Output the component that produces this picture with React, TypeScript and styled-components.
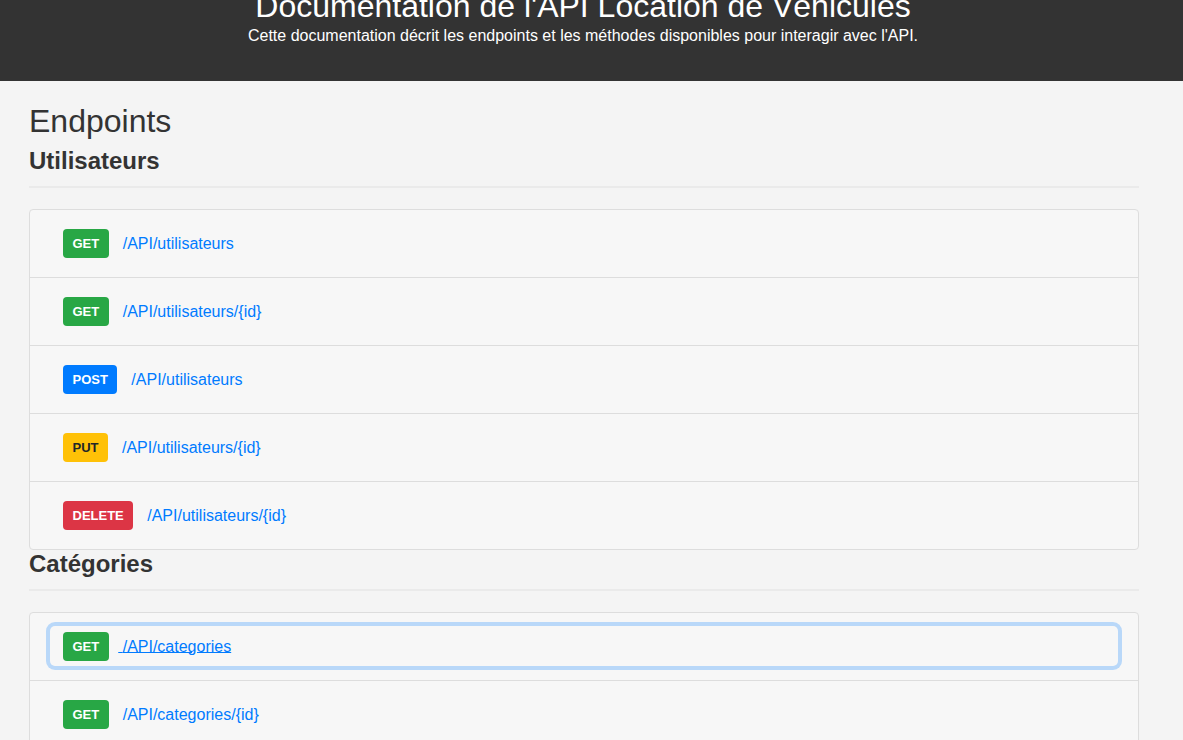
import React from "react";
import styled, { createGlobalStyle } from "styled-components";

type Method = "GET" | "POST" | "PUT" | "DELETE";

interface Endpoint {
    method: Method;
    path: string;
    focused?: boolean;
}

interface Section {
    title: string;
    endpoints: Endpoint[];
}

const sections: Section[] = [
    {
        title: "Utilisateurs",
        endpoints: [
            { method: "GET", path: "/API/utilisateurs" },
            { method: "GET", path: "/API/utilisateurs/{id}" },
            { method: "POST", path: "/API/utilisateurs" },
            { method: "PUT", path: "/API/utilisateurs/{id}" },
            { method: "DELETE", path: "/API/utilisateurs/{id}" },
        ],
    },
    {
        title: "Catégories",
        endpoints: [
            { method: "GET", path: "/API/categories", focused: true },
            { method: "GET", path: "/API/categories/{id}" },
            { method: "POST", path: "/API/categories" },
        ],
    },
];

const methodColors: Record<Method, { bg: string; fg: string }> = {
    GET: { bg: "#28a745", fg: "#ffffff" },
    POST: { bg: "#007bff", fg: "#ffffff" },
    PUT: { bg: "#ffc107", fg: "#212529" },
    DELETE: { bg: "#dc3545", fg: "#ffffff" },
};

// =============================================================================
// GLOBAL
// =============================================================================
const GlobalStyle = createGlobalStyle`
    html, body {
        margin: 0;
        overflow: hidden;
    }

    body {
        background: #f4f4f4;
        color: #333333;
        font-family: "Liberation Sans", Arial, sans-serif;
        font-size: 16px;
    }
`;

// =============================================================================
// HEADER
// =============================================================================
const Header = styled.header`
    margin-top: -33px;
    padding: 20px 37px 35px 20px;
    background: #333333;
    color: #ffffff;
    text-align: center;
`;

const HeaderTitle = styled.h1`
    margin: 0 0 1px;
    font-size: 32px;
    font-weight: 400;
    line-height: 1.2;
`;

const HeaderLead = styled.p`
    margin: 0;
    font-size: 16px;
    line-height: 1.2;
`;

// =============================================================================
// CONTENT
// =============================================================================
const Main = styled.main`
    width: 1110px;
    margin: 21px 0 0 29px;
`;

const PageTitle = styled.h2`
    margin: 0 0 7px;
    font-size: 32px;
    font-weight: 400;
    line-height: 1.2;
    color: #333333;
`;

const SectionTitle = styled.h3`
    margin: 0 0 21px;
    padding-bottom: 10px;
    border-bottom: 2px solid #eaeaea;
    font-size: 24px;
    font-weight: 700;
    line-height: 1.2;
    color: #333333;
`;

const EndpointList = styled.ul`
    margin: 0;
    padding: 0;
    list-style: none;
    background: #f7f7f7;
    border: 1px solid #dddddd;
    border-radius: 4px;
`;

const EndpointItem = styled.li`
    padding: 13px 20px 14px;

    & + & {
        border-top: 1px solid #dddddd;
    }
`;

const EndpointLink = styled.a<{ $focused?: boolean }>`
    display: block;
    height: 40px;
    padding: 0 13px;
    border-radius: 5px;
    line-height: 40px;
    color: #007bff;
    font-size: 16px;
    text-decoration: ${(p) => (p.$focused ? "underline" : "none")};
    box-shadow: ${(p) => (p.$focused ? "0 0 0 4px #b9d8f9" : "none")};
    white-space: nowrap;
`;

const MethodBadge = styled.span<{ $method: Method }>`
    display: inline-block;
    height: 29px;
    margin-right: 9.5px;
    padding: 0 9.5px;
    border-radius: 4px;
    background: ${(p) => methodColors[p.$method].bg};
    color: ${(p) => methodColors[p.$method].fg};
    font-size: 13px;
    font-weight: 700;
    line-height: 29px;
    vertical-align: middle;
`;

const Path = styled.span`
    vertical-align: middle;
`;

export default function App() {
    return (
        <>
            <GlobalStyle />
            <Header>
                <HeaderTitle>Documentation de l'API Location de Véhicules</HeaderTitle>
                <HeaderLead>
                    Cette documentation décrit les endpoints et les méthodes disponibles pour
                    interagir avec l'API.
                </HeaderLead>
            </Header>
            <Main>
                <PageTitle>Endpoints</PageTitle>
                {sections.map((section) => (
                    <section key={section.title}>
                        <SectionTitle>{section.title}</SectionTitle>
                        <EndpointList>
                            {section.endpoints.map((ep, i) => (
                                <EndpointItem key={i}>
                                    <EndpointLink href="#" $focused={ep.focused}>
                                        <MethodBadge $method={ep.method}>{ep.method}</MethodBadge>{" "}
                                        <Path>{ep.path}</Path>
                                    </EndpointLink>
                                </EndpointItem>
                            ))}
                        </EndpointList>
                    </section>
                ))}
            </Main>
        </>
    );
}
